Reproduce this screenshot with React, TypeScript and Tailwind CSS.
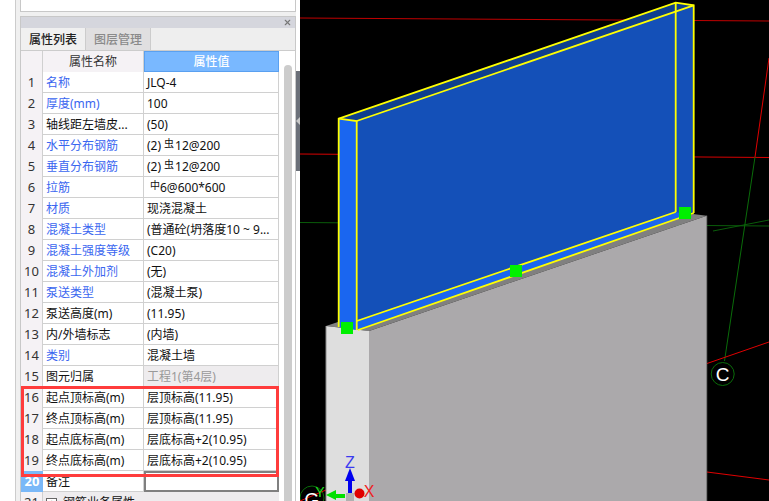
import { X } from 'lucide-react';
import type { ReactNode } from 'react';

type Row = {
  no: number;
  name: string;
  value?: ReactNode;
  blue?: boolean;
  valueClass?: string;
};

const Rebar = ({ glyph, lead }: { glyph: string; lead?: boolean }) => (
  <span className={`relative top-[-2px] text-[10px] ${lead ? 'ml-[3px]' : 'ml-[3px] mr-[1px]'}`}>{glyph}</span>
);

const rows: Row[] = [
  { no: 1, name: '名称', value: 'JLQ-4', blue: true },
  { no: 2, name: '厚度(mm)', value: '100', blue: true },
  { no: 3, name: '轴线距左墙皮...', value: '(50)' },
  { no: 4, name: '水平分布钢筋', value: <>(2)<Rebar glyph="虫" />12@200</>, blue: true },
  { no: 5, name: '垂直分布钢筋', value: <>(2)<Rebar glyph="虫" />12@200</>, blue: true },
  { no: 6, name: '拉筋', value: <><Rebar glyph="中" lead />6@600*600</>, blue: true },
  { no: 7, name: '材质', value: '现浇混凝土', blue: true },
  { no: 8, name: '混凝土类型', value: '(普通砼(坍落度10 ~ 9...', blue: true },
  { no: 9, name: '混凝土强度等级', value: '(C20)', blue: true },
  { no: 10, name: '混凝土外加剂', value: '(无)', blue: true },
  { no: 11, name: '泵送类型', value: '(混凝土泵)', blue: true },
  { no: 12, name: '泵送高度(m)', value: '(11.95)' },
  { no: 13, name: '内/外墙标志', value: '(内墙)' },
  { no: 14, name: '类别', value: '混凝土墙', blue: true },
  { no: 15, name: '图元归属', value: '工程1(第4层)', valueClass: 'bg-[#eeecee] text-[#999999]' },
  { no: 16, name: '起点顶标高(m)', value: '层顶标高(11.95)' },
  { no: 17, name: '终点顶标高(m)', value: '层顶标高(11.95)' },
  { no: 18, name: '起点底标高(m)', value: '层底标高+2(10.95)' },
  { no: 19, name: '终点底标高(m)', value: '层底标高+2(10.95)' },
];

function PropertyRow({ row }: { row: Row }) {
  return (
    <div className="grid h-[21px] grid-cols-[22px_101px_135px] border-b border-[#d0d0d0]">
      <div className="flex items-center justify-center border-r border-[#d0d0d0] bg-[#f5f2f5] pt-[1px] text-[13px] text-[#333333]">
        {row.no}
      </div>
      <div className={`flex items-center whitespace-nowrap border-r border-[#d0d0d0] pl-[3px] pt-[1px] ${row.blue ? 'text-[#3a66f0]' : 'text-[#111111]'}`}>
        {row.name}
      </div>
      <div className={`flex items-center whitespace-nowrap border-r border-[#d0d0d0] pl-[3px] pt-[1px] ${row.valueClass ?? 'text-[#111111]'}`}>
        {row.value}
      </div>
    </div>
  );
}

function Viewport() {
  return (
    <svg viewBox="300 0 469 501" className="h-[501px] w-[469px] bg-black">
      {/* axis grid behind the model */}
      <g strokeWidth="1" fill="none">
        <path d="M300 18 L769 21" stroke="#c00000" />
        <path d="M300 154 L769 157.5" stroke="#d80000" />
        <path d="M300 222.5 L769 226" stroke="#0a5c0a" />
        <path d="M713 231 L769 220" stroke="#0a5c0a" />
        <path d="M769 58 L755 157" stroke="#e00000" />
        <path d="M755 157 L724.5 361" stroke="#0a6c0a" />
        <path d="M707 363.5 L769 342" stroke="#e00000" />
        <path d="M707 472 L769 480" stroke="#e00000" />
        <circle cx="722.7" cy="374" r="11.5" stroke="#0a6c0a" />
        <circle cx="312" cy="498" r="12" stroke="#0a6c0a" />
        <path d="M300 501 L326 490" stroke="#e00000" />
      </g>
      <text x="722.7" y="381" textAnchor="middle" fill="#ffffff" className="text-[19px] [font-family:'Liberation_Sans',sans-serif]">C</text>
      <text x="312" y="506" textAnchor="middle" fill="#ffffff" className="text-[19px] [font-family:'Liberation_Sans',sans-serif]">G</text>

      {/* concrete wall */}
      <polygon points="326,326 338,322 693,214 706.7,215.7 369,331" fill="#808080" />
      <polygon points="369,331 706.7,215.7 706.7,501 369,501" fill="#aba9ab" />
      <polygon points="326,326 369,331 369,501 326,501" fill="#dedede" />
      <path d="M326 326 V501" stroke="#8a8a8a" />
      <path d="M706.7 215.7 V501" stroke="#808080" />

      {/* selected wall */}
      <polygon points="338.7,118.7 675.7,2.7 693.7,5.3 356.7,121" fill="#0e3f8e" />
      <polygon points="356.7,121 675.7,11.7 675.7,212 356.7,321" fill="#1450b8" />
      <polygon points="675.7,11.7 693.7,5.3 693.7,213 675.7,212" fill="#1450b8" />
      <polygon points="356.7,321 675.7,212 693.7,213 358,330" fill="#1a66f0" />
      <polygon points="338.7,118.7 356.7,121 356.7,330 338.7,327" fill="#1a66f0" />
      <g stroke="#ffff00" strokeWidth="1.8" fill="none">
        <path d="M338.7 327 V118.7 L675.7 2.7 L693.7 5.3 V213" />
        <path d="M338.7 118.7 L356.7 121 V330" />
        <path d="M356.7 121 L693.7 5.3" />
        <path d="M675.7 2.7 V212" />
        <path d="M356.7 321 L675.7 212" />
        <path d="M358 330 L693.7 213" />
      </g>
      <g fill="#00f000" shapeRendering="crispEdges">
        <rect x="679" y="207" width="12" height="12" />
        <rect x="510" y="265" width="12" height="12" />
        <rect x="341" y="322" width="12" height="12" />
      </g>

      {/* axis gizmo */}
      <rect x="346" y="493" width="8" height="8" fill="#b0b0b0" />
      <path d="M350 493 V479" stroke="#0000ee" strokeWidth="4" />
      <polygon points="350,468 345,481 355,481" fill="#0000ee" />
      <path d="M345 496 H334" stroke="#00e000" strokeWidth="4" />
      <polygon points="326,495 336,490 336,500" fill="#00e000" />
      <circle cx="359.5" cy="493.5" r="5" fill="#e00000" />
      <text x="350" y="468" textAnchor="middle" fill="#3a3af0" className="text-[16px] [font-family:'Liberation_Sans',sans-serif]">Z</text>
      <text x="320" y="497" textAnchor="middle" fill="#22e022" className="text-[14px] [font-family:'Liberation_Sans',sans-serif]">Y</text>
      <text x="369" y="497" textAnchor="middle" fill="#f02020" className="text-[16px] [font-family:'Liberation_Sans',sans-serif]">X</text>
    </svg>
  );
}

export default function App() {
  return (
    <div className="flex h-[501px] w-[769px] overflow-hidden bg-white text-[12px] [font-family:'Noto_Sans','Noto_Sans_CJK_SC',sans-serif]">
      <div className="w-[16px] border-r border-[#cccccc] bg-white" />
      <div className="w-[4px] bg-[#f0f0f0]" />

      <div className="flex w-[276px] flex-col bg-[#f0f0f0]">
        <div className="h-[12px] shrink-0 border-x border-b border-[#c8c8c8] bg-white" />

        <div className="mt-[4px] flex min-h-0 flex-1 flex-col border-x border-t border-[#c8c8c8] bg-white">
          <div className="flex h-[11px] shrink-0 items-center justify-end bg-[#d5d6dd] pr-[3px]">
            <X size={9} strokeWidth={3} className="text-[#777777]" />
          </div>

          <div className="flex h-[23px] shrink-0 border-b border-[#cccccc] bg-[#eeeeee]">
            <div className="flex w-[65px] items-center justify-center border-r border-[#cccccc] bg-[#f0f0f0] pt-[1px] font-medium text-[#222222]">
              属性列表
            </div>
            <div className="flex w-[65px] items-center justify-center border-r border-[#cccccc] bg-[#e0dfe0] pt-[1px] font-medium text-[#8a8a8a]">
              图层管理
            </div>
          </div>

          <div className="flex min-h-0 flex-1">
            <div className="relative w-[258px] shrink-0">
              <div className="grid h-[21px] grid-cols-[22px_101px_135px] border-b border-[#d0d0d0]">
                <div className="border-r border-[#d0d0d0] bg-[#f5f2f5]" />
                <div className="flex items-center justify-center border-r border-[#d0d0d0] bg-[#f5f2f5] pt-[1px] text-[#333333]">
                  属性名称
                </div>
                <div className="flex items-center justify-center border border-[#5aa0f0] bg-[#79b8ff] pt-[1px] font-medium text-white">
                  属性值
                </div>
              </div>

              {rows.map((row) => (
                <PropertyRow key={row.no} row={row} />
              ))}

              <div className="grid h-[21px] grid-cols-[22px_101px_135px] border-b border-[#d0d0d0]">
                <div className="flex items-center justify-center bg-[#7ab8f8] pt-[1px] text-[13px] font-bold text-white">20</div>
                <div className="flex items-center border-r border-[#d0d0d0] pl-[3px] pt-[1px] text-[#111111]">备注</div>
                <div className="border-2 border-[#808080] bg-white" />
              </div>

              <div className="grid h-[21px] grid-cols-[22px_236px] bg-[#eeecee]">
                <div className="flex items-center justify-center border-r border-[#d0d0d0] bg-[#f5f2f5] pt-[1px] text-[13px] text-[#333333]">21</div>
                <div className="flex items-center gap-[6px] pl-[3px] pt-[1px] text-[#111111]">
                  <span className="flex h-[11px] w-[11px] items-center justify-center border border-[#666666] bg-white text-[10px] leading-none">+</span>
                  钢筋业务属性
                </div>
              </div>

              <div className="absolute left-0 top-[335px] h-[91px] w-[258px] border-[3px] border-[#ff3c3c]" />
            </div>

            <div className="flex-1">
              <div className="ml-[5px] mt-[14px] h-full w-[8px] rounded-t-[4px] bg-[#cccccc]" />
            </div>
          </div>
        </div>
      </div>

      <div className="w-[4px]">
        <div className="mt-[71px] flex h-[100px] items-center bg-[#6b7079]">
          <svg viewBox="0 0 4 8" className="h-[8px] w-[4px]">
            <polygon points="4,0 0,4 4,8" fill="#c8c8c8" />
          </svg>
        </div>
      </div>

      <Viewport />
    </div>
  );
}
